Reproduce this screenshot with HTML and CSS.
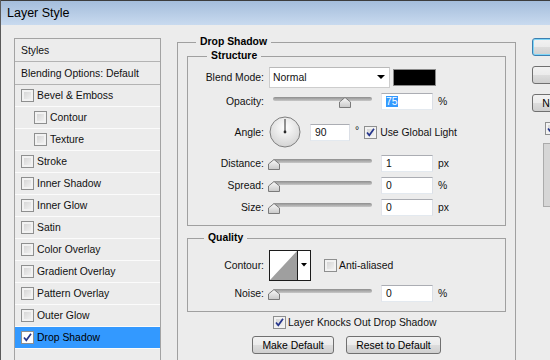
FILE: index.html
```html
<!DOCTYPE html>
<html lang="en">
<head>
  <meta charset="UTF-8">
  <title>Layer Style</title>
  <link rel="stylesheet" href="styles.css">
</head>
<body>
  <div class="window">
    <div class="titlebar">Layer Style</div>

    <div class="main">
      <!-- left list of effects -->
      <ul class="styles-list">
        <li class="head">Styles</li>
        <li class="head">Blending Options: Default</li>
        <li><span class="cb"></span>Bevel &amp; Emboss</li>
        <li class="sub"><span class="cb"></span>Contour</li>
        <li class="sub"><span class="cb"></span>Texture</li>
        <li><span class="cb"></span>Stroke</li>
        <li><span class="cb"></span>Inner Shadow</li>
        <li><span class="cb"></span>Inner Glow</li>
        <li><span class="cb"></span>Satin</li>
        <li><span class="cb"></span>Color Overlay</li>
        <li><span class="cb"></span>Gradient Overlay</li>
        <li><span class="cb"></span>Pattern Overlay</li>
        <li><span class="cb"></span>Outer Glow</li>
        <li class="active"><span class="cb white"><svg width="11" height="11" viewBox="0 0 11 11"><path d="M2 5.5 L4.3 8.3 L9 1.8" fill="none" stroke="#25358c" stroke-width="1.7"/></svg></span>Drop Shadow</li>
      </ul>

      <!-- drop shadow settings -->
      <fieldset class="group outer">
        <legend>Drop Shadow</legend>

        <fieldset class="group inner structure">
          <legend>Structure</legend>
          <div class="row h-blend">
            <span class="lbl">Blend Mode:</span>
            <div class="select"><span>Normal</span><span class="arrow"></span></div>
            <div class="swatch"></div>
          </div>
          <div class="row h-opac">
            <span class="lbl">Opacity:</span>
            <div class="slider">
              <div class="track"></div>
              <div class="range">
                <svg class="thumb" style="left:75%" width="12" height="11" viewBox="0 0 12 11"><path d="M6 0.5 L11.5 5 L11.5 10.5 L0.5 10.5 L0.5 5 Z" fill="url(#tg)" stroke="#7a7a7a"/></svg>
              </div>
            </div>
            <div class="num"><span class="sel">75</span></div>
            <span class="unit">%</span>
          </div>
          <div class="row h-angle">
            <span class="lbl">Angle:</span>
            <svg class="dial" width="32" height="32" viewBox="0 0 32 32">
              <defs>
                <radialGradient id="dg" cx="50%" cy="35%" r="65%">
                  <stop offset="0" stop-color="#ffffff"/>
                  <stop offset="1" stop-color="#d4d4d4"/>
                </radialGradient>
                <linearGradient id="tg" x1="0" y1="0" x2="0" y2="1">
                  <stop offset="0" stop-color="#fafafa"/>
                  <stop offset="1" stop-color="#c8c8c8"/>
                </linearGradient>
              </defs>
              <circle cx="16" cy="16" r="15" fill="url(#dg)" stroke="#7e7e7e"/>
              <line x1="16" y1="16" x2="16" y2="3" stroke="#2a2a2a"/>
              <circle cx="16" cy="16" r="1.4" fill="#2a2a2a"/>
            </svg>
            <div class="num deg">90</div>
            <span class="degree">°</span>
            <span class="cb gl"><svg width="11" height="11" viewBox="0 0 11 11"><path d="M2 5.5 L4.3 8.3 L9 1.8" fill="none" stroke="#25358c" stroke-width="1.7"/></svg></span>
            <span>Use Global Light</span>
          </div>
          <div class="row h-std">
            <span class="lbl">Distance:</span>
            <div class="slider">
              <div class="track"></div>
              <div class="range">
                <svg class="thumb" style="left:0%" width="12" height="11" viewBox="0 0 12 11"><path d="M6 0.5 L11.5 5 L11.5 10.5 L0.5 10.5 L0.5 5 Z" fill="url(#tg)" stroke="#7a7a7a"/></svg>
              </div>
            </div>
            <div class="num">1</div>
            <span class="unit">px</span>
          </div>
          <div class="row h-std">
            <span class="lbl">Spread:</span>
            <div class="slider">
              <div class="track"></div>
              <div class="range">
                <svg class="thumb" style="left:0%" width="12" height="11" viewBox="0 0 12 11"><path d="M6 0.5 L11.5 5 L11.5 10.5 L0.5 10.5 L0.5 5 Z" fill="url(#tg)" stroke="#7a7a7a"/></svg>
              </div>
            </div>
            <div class="num">0</div>
            <span class="unit">%</span>
          </div>
          <div class="row h-std">
            <span class="lbl">Size:</span>
            <div class="slider">
              <div class="track"></div>
              <div class="range">
                <svg class="thumb" style="left:0%" width="12" height="11" viewBox="0 0 12 11"><path d="M6 0.5 L11.5 5 L11.5 10.5 L0.5 10.5 L0.5 5 Z" fill="url(#tg)" stroke="#7a7a7a"/></svg>
              </div>
            </div>
            <div class="num">0</div>
            <span class="unit">px</span>
          </div>
        </fieldset>

        <fieldset class="group inner quality">
          <legend>Quality</legend>
          <div class="row h-contour">
            <span class="lbl">Contour:</span>
            <svg class="contour" width="42" height="31" viewBox="0 0 42 31">
              <rect x="0.5" y="0.5" width="41" height="30" fill="#fff" stroke="#1c1c1c"/>
              <polygon points="1,30 28,1 28,30" fill="#9f9f9f"/>
              <line x1="28.5" y1="1" x2="28.5" y2="30" stroke="#1c1c1c"/>
              <polygon points="32,13 38,13 35,16.5" fill="#000"/>
            </svg>
            <span class="cb aa"></span>
            <span>Anti-aliased</span>
          </div>
          <div class="row h-noise">
            <span class="lbl">Noise:</span>
            <div class="slider">
              <div class="track"></div>
              <div class="range">
                <svg class="thumb" style="left:0%" width="12" height="11" viewBox="0 0 12 11"><path d="M6 0.5 L11.5 5 L11.5 10.5 L0.5 10.5 L0.5 5 Z" fill="url(#tg)" stroke="#7a7a7a"/></svg>
              </div>
            </div>
            <div class="num">0</div>
            <span class="unit">%</span>
          </div>
        </fieldset>

        <div class="knock">
          <span class="cb"><svg width="11" height="11" viewBox="0 0 11 11"><path d="M2 5.5 L4.3 8.3 L9 1.8" fill="none" stroke="#25358c" stroke-width="1.7"/></svg></span>
          <span>Layer Knocks Out Drop Shadow</span>
        </div>
        <div class="btn-row">
          <div class="btn make">Make Default</div>
          <div class="btn reset">Reset to Default</div>
        </div>
      </fieldset>

      <!-- dialog buttons -->
      <div class="side">
        <div class="btn focus">OK</div>
        <div class="btn">Cancel</div>
        <div class="btn">New Style...</div>
        <div class="preview-check">
          <span class="cb"><svg width="11" height="11" viewBox="0 0 11 11"><path d="M2 5.5 L4.3 8.3 L9 1.8" fill="none" stroke="#25358c" stroke-width="1.7"/></svg></span>
          <span>Preview</span>
        </div>
        <div class="preview-box"></div>
      </div>
    </div>
  </div>
</body>
</html>
```

FILE: styles.css
```css
* {
  box-sizing: border-box;
}

html, body {
  margin: 0;
}

body {
  width: 550px;
  height: 360px;
  overflow: hidden;
  background: #ececec;
  font: 10.4px "Liberation Sans", Arial, sans-serif;
  color: #111;
}

.window {
  height: 360px;
  border-left: 1px solid #5a5a5a;
}

.titlebar {
  height: 25px;
  border-top: 1px solid #3c3c3c;
  background: linear-gradient(#a4bddb, #c8daef);
  padding-left: 6px;
  font-size: 12.5px;
  line-height: 24px;
  color: #000;
}

.main {
  display: flex;
  align-items: flex-start;
  padding: 13px 0 0 13px;
}

/* Effects list */
.styles-list {
  list-style: none;
  margin: 0;
  padding: 0;
  width: 147px;
  height: 340px;
  border: 1px solid #a3a3a3;
  flex: none;
}

.styles-list li {
  height: 22px;
  border-bottom: 1px solid #fbfbfb;
  display: flex;
  align-items: center;
  padding-left: 6px;
  white-space: nowrap;
}

.styles-list li.head {
  height: 23px;
  border-bottom-color: #b3b3b3;
}

.styles-list li.sub {
  padding-left: 19px;
}

.styles-list li .cb {
  margin-right: 3px;
}

.styles-list li.active {
  background: #3399ff;
  color: #000;
}

/* Checkboxes */
.cb {
  display: inline-flex;
  align-items: center;
  justify-content: center;
  width: 13px;
  height: 13px;
  flex: none;
  border: 1px solid #8e8f8f;
  background: linear-gradient(135deg, #cfcfcf, #f7f7f7);
  box-shadow: inset 0 0 0 2px #f2f2f2;
}

.cb.white {
  background: #fff;
  box-shadow: none;
}

/* Group boxes */
.group {
  margin: 0;
  padding: 0;
  border: 1px solid #a0a0a0;
  min-width: 0;
}

.group legend {
  padding: 0 4px;
  line-height: 14px;
  font-weight: bold;
  color: #000;
}

.outer {
  width: 339px;
  margin: -3px 0 0 16px;
  padding-bottom: 40px;
  flex: none;
}

.outer > legend {
  margin-left: 18px;
}

.inner {
  margin: 0 9px;
}

.structure {
  padding-bottom: 7px;
}

.structure legend {
  margin-left: 19px;
}

.quality {
  margin-top: 5px;
  padding-bottom: 9px;
}

.quality legend {
  margin-left: 16px;
}

/* Rows */
.row {
  display: flex;
  align-items: center;
}

.row .lbl {
  width: 76px;
  margin-right: 5px;
  text-align: right;
  flex: none;
}

.h-blend { height: 28px; }
.h-opac { height: 21px; }
.h-angle { height: 40px; }
.h-std { height: 22px; }
.h-contour { height: 40px; }
.h-noise { height: 17px; }

.select {
  width: 121px;
  height: 21px;
  border: 1px solid #cdcdcd;
  border-top-color: #b9b9b9;
  background: #fff;
  display: flex;
  align-items: center;
  justify-content: space-between;
  padding: 0 4px 0 3px;
}

.arrow {
  width: 0;
  height: 0;
  border-left: 4px solid transparent;
  border-right: 4px solid transparent;
  border-top: 4px solid #000;
}

.swatch {
  margin-left: 3px;
  width: 43px;
  height: 17px;
  background: #000;
  border: 1px solid #8a8a8a;
}

/* Sliders */
.slider {
  position: relative;
  width: 104px;
  height: 11px;
  margin-top: 2px;
}

.track {
  margin: 0 1px 0 4px;
  height: 4px;
  border-radius: 2px;
  background: linear-gradient(#8e8e8e, #c8c8c8);
}

.range {
  position: absolute;
  left: 5px;
  right: 4px;
  top: 0;
  bottom: 0;
}

.thumb {
  position: absolute;
  top: 0;
  margin-left: -6px;
}

.num {
  width: 52px;
  height: 17px;
  margin-left: 8px;
  padding-left: 4px;
  display: flex;
  align-items: center;
  background: #fff;
  border: 1px solid;
  border-color: #abadb3 #dbdfe6 #e3e9ef #e2e3ea;
}

.num .sel {
  background: #3399ff;
  color: #fff;
}

.num.deg {
  width: 40px;
  margin-left: 9px;
}

.unit {
  margin-left: 5px;
}

.dial {
  margin-left: 0;
}

.degree {
  margin: -4px 0 0 5px;
}

.cb.gl {
  margin: 0 3px 0 5px;
}

.contour {
  flex: none;
}

.cb.aa {
  margin: 0 2px 0 13px;
}

/* Below the groups */
.knock {
  height: 20px;
  display: flex;
  align-items: center;
  padding-left: 95px;
}

.knock .cb {
  margin-right: 2px;
}

.btn-row {
  margin-top: 4px;
  display: flex;
  justify-content: center;
  gap: 12px;
}

.btn {
  height: 18px;
  display: flex;
  align-items: center;
  justify-content: center;
  border: 1px solid #707070;
  border-radius: 3px;
  background: linear-gradient(#f2f2f2 0%, #ebebeb 50%, #dddddd 50%, #cfcfcf 100%);
  color: #000;
  white-space: nowrap;
}

.btn.make { width: 82px; }
.btn.reset { width: 95px; }

/* Dialog buttons column */
.side {
  margin-left: 16px;
  width: 90px;
  flex: none;
}

.side .btn {
  width: 76px;
  margin-bottom: 10px;
}

.side .btn.focus {
  border-color: #3c7fb1;
  box-shadow: inset 0 0 0 1px #7fd6f7;
}

.preview-check {
  display: flex;
  align-items: center;
  height: 13px;
  padding-left: 13px;
}

.preview-check .cb {
  margin-right: 3px;
}

.preview-box {
  margin: 8px 0 0 11px;
  width: 60px;
  height: 64px;
  background: #d6d6d6;
  border: 1px solid #ababab;
}
```
